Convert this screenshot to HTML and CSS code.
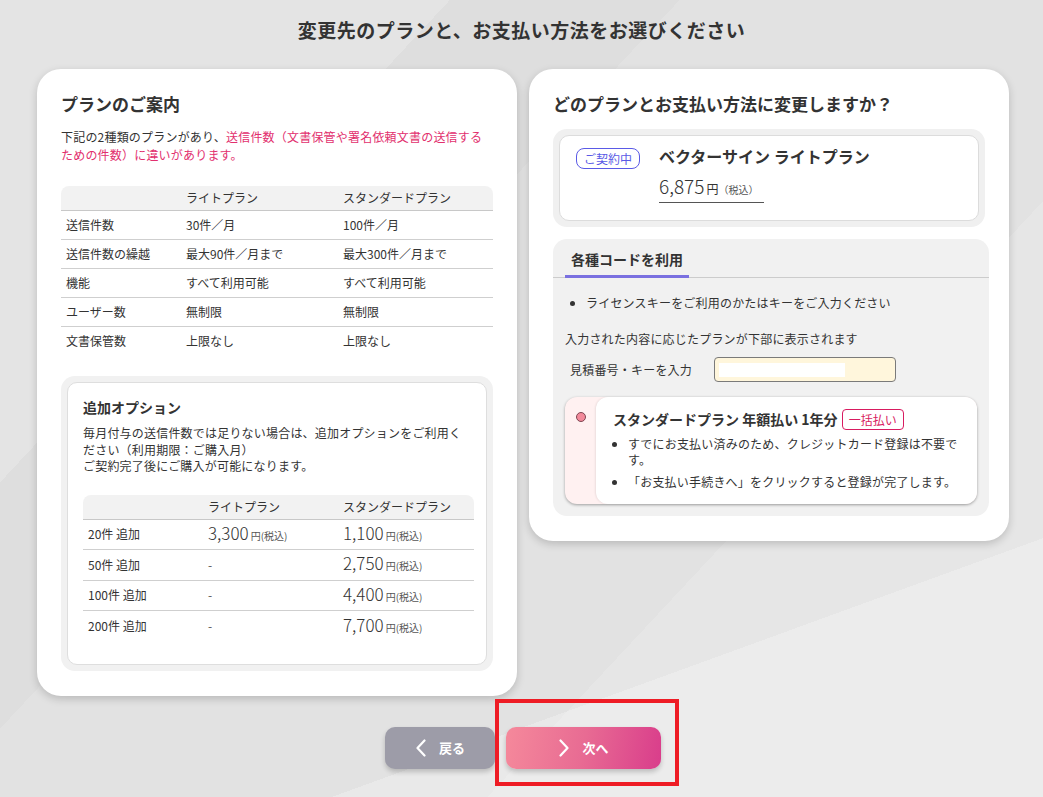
FILE: index.html
```html
<!DOCTYPE html>
<html lang="ja">
<head>
<meta charset="utf-8">
<title>プラン変更</title>
<link rel="stylesheet" href="styles.css">
</head>
<body>
<div class="page">
  <h1 class="page-title">変更先のプランと、お支払い方法をお選びください</h1>

  <div class="cards">
    <section class="card card-left">
      <h2 class="card-title">プランのご案内</h2>
      <p class="intro">下記の2種類のプランがあり、<span class="accent">送信件数（文書保管や署名依頼文書の送信する<br>ための件数）に違いがあります。</span></p>

      <table class="plan-table">
        <colgroup><col class="c1"><col class="c2"><col></colgroup>
        <thead>
          <tr><th></th><th>ライトプラン</th><th>スタンダードプラン</th></tr>
        </thead>
        <tbody>
          <tr><td>送信件数</td><td>30件／月</td><td>100件／月</td></tr>
          <tr><td>送信件数の繰越</td><td>最大90件／月まで</td><td>最大300件／月まで</td></tr>
          <tr><td>機能</td><td>すべて利用可能</td><td>すべて利用可能</td></tr>
          <tr><td>ユーザー数</td><td>無制限</td><td>無制限</td></tr>
          <tr><td>文書保管数</td><td>上限なし</td><td>上限なし</td></tr>
        </tbody>
      </table>

      <div class="option-box">
        <div class="option-inner">
          <h3 class="option-title">追加オプション</h3>
          <p class="option-text">毎月付与の送信件数では足りない場合は、追加オプションをご利用く<br>ださい（利用期限：ご購入月）<br>ご契約完了後にご購入が可能になります。</p>
          <table class="option-table">
            <colgroup><col class="o1"><col class="o2"><col></colgroup>
            <thead>
              <tr><th></th><th>ライトプラン</th><th>スタンダードプラン</th></tr>
            </thead>
            <tbody>
              <tr><td>20件 追加</td><td><span class="num">3,300</span><span class="yen">円(税込)</span></td><td><span class="num">1,100</span><span class="yen">円(税込)</span></td></tr>
              <tr><td>50件 追加</td><td class="dash">-</td><td><span class="num">2,750</span><span class="yen">円(税込)</span></td></tr>
              <tr><td>100件 追加</td><td class="dash">-</td><td><span class="num">4,400</span><span class="yen">円(税込)</span></td></tr>
              <tr><td>200件 追加</td><td class="dash">-</td><td><span class="num">7,700</span><span class="yen">円(税込)</span></td></tr>
            </tbody>
          </table>
        </div>
      </div>
    </section>

    <section class="card card-right">
      <h2 class="card-title">どのプランとお支払い方法に変更しますか？</h2>

      <div class="current-box">
        <div class="current-inner">
          <span class="badge-current">ご契約中</span>
          <div class="current-info">
            <div class="current-name">ベクターサイン ライトプラン</div>
            <div class="current-price"><span class="price-num">6,875</span><span class="price-yen">円</span><span class="price-tax">（税込）</span></div>
          </div>
        </div>
      </div>

      <div class="code-box">
        <div class="tabs"><span class="tab">各種コードを利用</span></div>
        <div class="code-body">
          <ul class="code-list">
            <li>ライセンスキーをご利用のかたはキーをご入力ください</li>
          </ul>
          <p class="code-note">入力された内容に応じたプランが下部に表示されます</p>
          <div class="code-row">
            <span class="code-label">見積番号・キーを入力</span>
            <div class="code-input"><span class="code-fill"></span></div>
          </div>

          <div class="plan-option">
            <div class="radio-col"><span class="radio"></span></div>
            <div class="plan-card">
              <div class="plan-title">スタンダードプラン 年額払い 1年分<span class="badge-lump">一括払い</span></div>
              <ul class="plan-list">
                <li>すでにお支払い済みのため、クレジットカード登録は不要で<br>す。</li>
                <li>「お支払い手続きへ」をクリックすると登録が完了します。</li>
              </ul>
            </div>
          </div>
        </div>
      </div>
    </section>
  </div>

  <div class="actions">
    <button class="btn btn-back" type="button">
      <svg class="chev" width="12" height="18" viewBox="0 0 12 18"><path d="M9.5 1.5 L2.5 9 L9.5 16.5" fill="none" stroke="#fff" stroke-width="2.2" stroke-linecap="round" stroke-linejoin="round"/></svg>
      <span>戻る</span>
    </button>
    <button class="btn btn-next" type="button">
      <svg class="chev" width="12" height="18" viewBox="0 0 12 18"><path d="M2.5 1.5 L9.5 9 L2.5 16.5" fill="none" stroke="#fff" stroke-width="2.2" stroke-linecap="round" stroke-linejoin="round"/></svg>
      <span>次へ</span>
    </button>
  </div>

  <div class="highlight"></div>
</div>
</body>
</html>
```

FILE: styles.css
```css
* { box-sizing: border-box; }

html, body {
  margin: 0;
  padding: 0;
}

body {
  font-family: "Noto Sans CJK JP", "Noto Sans", sans-serif;
  color: #333;
  background: #e4e4e4;
}

.page {
  position: relative;
  width: 1043px;
  height: 797px;
  overflow: hidden;
  background:
    linear-gradient(160deg, rgba(255,255,255,0) 0, rgba(255,255,255,0) 78%, rgba(255,255,255,0.25) 78%),
    linear-gradient(133deg, #e4e4e4 0, #e4e4e4 329px, #dedede 329px, #dedede 497px, #e2e2e2 497px, #e2e2e2 900px, #e6e6e6 900px);
}

.page-title {
  margin: 0;
  padding: 17px 0 26px;
  font-size: 19px;
  line-height: 26px;
  font-weight: 700;
  letter-spacing: 0.5px;
  text-align: center;
  color: #333;
}

.cards {
  display: flex;
  align-items: flex-start;
  gap: 12px;
  padding-left: 37px;
}

.card {
  width: 480px;
  background: #fff;
  border-radius: 24px;
  box-shadow: 0 3px 8px rgba(0, 0, 0, 0.18);
  padding: 24px 24px 25px;
}

.card-title {
  margin: 0;
  font-size: 17px;
  line-height: 22px;
  font-weight: 700;
  color: #333;
}

.intro {
  margin: 13px 0 0;
  font-size: 12px;
  line-height: 18px;
  letter-spacing: 0.2px;
  color: #333;
}

.accent { color: #e2306e; }

/* main comparison table */
.plan-table {
  width: 100%;
  margin-top: 22px;
  border-collapse: separate;
  border-spacing: 0;
  table-layout: fixed;
  font-size: 12px;
  color: #333;
}

.plan-table .c1 { width: 120px; }
.plan-table .c2 { width: 157px; }

.plan-table th {
  background: #f2f2f2;
  font-weight: 400;
  text-align: left;
  line-height: 24px;
  padding: 0 5px;
  border-bottom: 1px solid #c8c8c8;
}

.plan-table th:first-child { border-top-left-radius: 8px; }
.plan-table th:last-child { border-top-right-radius: 8px; }

.plan-table td {
  line-height: 28px;
  padding: 0 5px;
  border-bottom: 1px solid #cfcfcf;
}

.plan-table tbody tr:last-child td { border-bottom: none; }

/* additional options */
.option-box {
  margin-top: 21px;
  background: #f1f1f1;
  border-radius: 14px;
  padding: 6px;
}

.option-inner {
  background: #fff;
  border: 1px solid #dedede;
  border-radius: 10px;
  padding: 14px 12px 22px 15px;
}

.option-title {
  margin: 0;
  font-size: 14px;
  line-height: 20px;
  font-weight: 700;
  color: #333;
}

.option-text {
  margin: 8px 0 0;
  font-size: 12px;
  line-height: 16.5px;
  letter-spacing: 0.2px;
  color: #333;
}

.option-table {
  width: 100%;
  margin-top: 20px;
  border-collapse: separate;
  border-spacing: 0;
  table-layout: fixed;
  font-size: 12px;
  color: #333;
}

.option-table .o1 { width: 120px; }
.option-table .o2 { width: 135px; }

.option-table th {
  background: #f2f2f2;
  font-weight: 400;
  text-align: left;
  line-height: 24px;
  padding: 0 5px;
  border-bottom: 1px solid #c8c8c8;
}

.option-table th:first-child { border-top-left-radius: 8px; }
.option-table th:last-child { border-top-right-radius: 8px; }

.option-table td {
  height: 30.5px;
  line-height: 16px;
  padding: 0 5px;
  border-bottom: 1px solid #cfcfcf;
  white-space: nowrap;
  vertical-align: middle;
}

.option-table tbody tr:last-child td { border-bottom: none; }

.num {
  font-size: 17px;
  font-weight: 300;
  line-height: 16px;
  color: #333;
}

.yen {
  font-size: 10px;
  line-height: 16px;
  color: #555;
  margin-left: 2px;
}

.dash { color: #555; }

/* right card */
.current-box {
  margin-top: 14px;
  background: #f0f0f0;
  border-radius: 14px;
  padding: 6px;
}

.current-inner {
  display: flex;
  align-items: flex-start;
  background: #fff;
  border: 1px solid #dcdcdc;
  border-radius: 10px;
  padding: 9px 16px 17px;
}

.badge-current {
  margin-top: 3px;
  width: 64px;
  height: 21px;
  border: 1px solid #5a5ae6;
  border-radius: 8px;
  color: #5a5ae6;
  font-size: 12px;
  line-height: 19px;
  text-align: center;
  flex-shrink: 0;
}

.current-info {
  margin-left: 19px;
}

.current-name {
  font-size: 16px;
  line-height: 22px;
  font-weight: 700;
  color: #333;
}

.current-price {
  display: inline-block;
  margin-top: 7px;
  padding-right: 6px;
  line-height: 24px;
  border-bottom: 1px solid #555;
}

.price-num {
  font-size: 19px;
  font-weight: 300;
  color: #333;
}

.price-yen {
  font-size: 12px;
  margin-left: 2px;
}

.price-tax {
  font-size: 10px;
  color: #555;
}

.code-box {
  margin-top: 12px;
  background: #f1f1f1;
  border-radius: 14px;
  width: 436px;
}

.tabs {
  padding: 0 12px;
  border-bottom: 1px solid #cccccc;
}

.tab {
  display: inline-block;
  padding: 10px 6px 6px;
  font-size: 14px;
  line-height: 20px;
  font-weight: 700;
  color: #333;
  border-bottom: 3px solid #7a70e0;
  margin-bottom: -1px;
}

.code-body {
  padding: 0 12px 12px;
}

.code-list {
  margin: 16px 0 0;
  padding-left: 21px;
  font-size: 12px;
  line-height: 18px;
  letter-spacing: 0.2px;
  color: #333;
}

.code-note {
  margin: 18px 0 0;
  font-size: 12px;
  line-height: 18px;
  letter-spacing: 0.2px;
  color: #333;
}

.code-row {
  display: flex;
  align-items: center;
  margin-top: 9px;
}

.code-label {
  width: 149px;
  padding-left: 5px;
  font-size: 12px;
  letter-spacing: 0.2px;
  color: #333;
}

.code-input {
  width: 182px;
  height: 25px;
  border: 1px solid #7a7a7a;
  border-radius: 4px;
  background: #fff6dc;
  padding: 5px 4px;
}

.code-fill {
  display: block;
  width: 126px;
  height: 14px;
  background: #fff;
}

.plan-option {
  position: relative;
  display: flex;
  margin-top: 15px;
  background: #fff1f1;
  border-radius: 12px;
  box-shadow: 0 1px 3px rgba(0, 0, 0, 0.35);
}

.radio-col {
  width: 31px;
  flex-shrink: 0;
  display: flex;
  justify-content: center;
  padding-top: 15px;
}

.radio {
  display: block;
  width: 10px;
  height: 10px;
  border-radius: 50%;
  border: 1.5px solid #7d4652;
  background: #f2899a;
}

.plan-card {
  flex: 1;
  background: #fff;
  border-radius: 12px;
  box-shadow: -1px 0 2px rgba(0, 0, 0, 0.08);
  padding: 11px 12px 14px 17px;
}

.plan-title {
  font-size: 14px;
  line-height: 22px;
  font-weight: 700;
  color: #333;
  display: flex;
  align-items: center;
}

.badge-lump {
  display: inline-block;
  margin-left: 4px;
  height: 21px;
  padding: 0 6px;
  border: 1px solid #d81b60;
  border-radius: 4px;
  color: #d81b60;
  font-size: 12px;
  font-weight: 400;
  line-height: 19px;
}

.plan-list {
  margin: 6px 0 0;
  padding-left: 15px;
  font-size: 12px;
  line-height: 16px;
  letter-spacing: 0.2px;
  color: #333;
}

.plan-list li + li { margin-top: 6px; }

/* buttons */
.actions {
  display: flex;
  justify-content: center;
  gap: 11px;
  margin-top: 31px;
  padding-left: 3px;
}

.btn {
  display: flex;
  align-items: center;
  justify-content: center;
  gap: 12px;
  height: 42px;
  border: none;
  border-radius: 10px;
  color: #fff;
  font-family: "Noto Sans CJK JP", sans-serif;
  font-size: 13px;
  font-weight: 700;
  box-shadow: 0 3px 5px rgba(0, 0, 0, 0.2);
  cursor: pointer;
}

.btn-back {
  width: 110px;
  background: #9d9ca8;
}

.btn-next {
  width: 155px;
  background: linear-gradient(100deg, #f5899b 0%, #e86b93 50%, #d93d8b 100%);
}

.chev { display: block; }

.highlight {
  position: absolute;
  left: 495px;
  top: 699px;
  width: 184px;
  height: 87px;
  border: 4px solid #ee1c25;
}
```
